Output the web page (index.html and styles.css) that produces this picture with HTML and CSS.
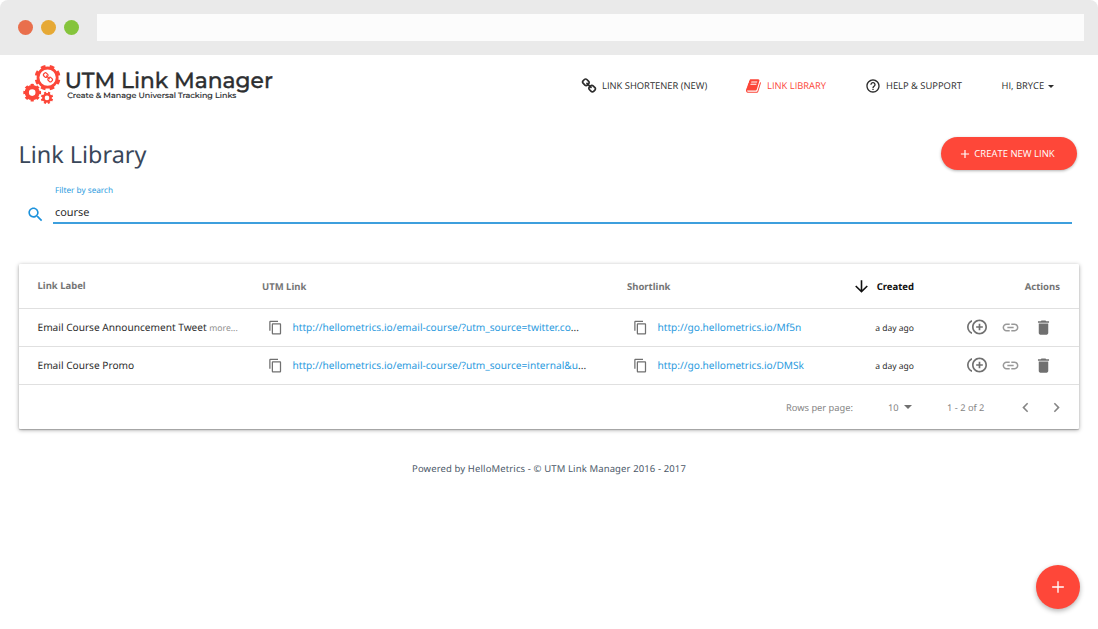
FILE: index.html
```
<!DOCTYPE html>
<html lang="en">
<head>
<meta charset="utf-8">
<title>UTM Link Manager</title>
<link rel="stylesheet" href="styles.css">
</head>
<body>
<svg class="defs" width="0" height="0" aria-hidden="true">
  <symbol id="copy" viewBox="0 0 24 24"><path d="M16 1H4c-1.100 0-2 .9-2 2v14h2V3h12V1zm3 4H8c-1.100 0-2 .9-2 2v14c0 1.100.9 2 2 2h11c1.100 0 2-.9 2-2V7c0-1.100-.9-2-2-2zm0 16H8V7h11v14z"/></symbol>
  <symbol id="dup" viewBox="0 0 24 24"><path d="M16 8h-2v3h-3v2h3v3h2v-3h3v-2h-3zM2 12c0-2.790 1.640-5.200 4.010-6.320V3.520C2.520 4.760 0 8.090 0 12s2.520 7.240 6.010 8.480v-2.160C3.640 17.200 2 14.790 2 12zm13-9c-4.960 0-9 4.040-9 9s4.040 9 9 9 9-4.040 9-9-4.040-9-9-9zm0 16c-3.860 0-7-3.140-7-7s3.140-7 7-7 7 3.140 7 7-3.140 7-7 7z"/></symbol>
  <symbol id="link" viewBox="0 0 24 24"><path d="M3.900 12c0-1.710 1.390-3.100 3.100-3.100h4V7H7c-2.760 0-5 2.240-5 5s2.240 5 5 5h4v-1.900H7c-1.710 0-3.100-1.390-3.100-3.100zM8 13h8v-2H8v2zm9-6h-4v1.900h4c1.710 0 3.100 1.390 3.100 3.100s-1.390 3.100-3.100 3.100h-4V17h4c2.760 0 5-2.240 5-5s-2.240-5-5-5z"/></symbol>
  <symbol id="trash" viewBox="0 0 24 24"><path d="M6 19c0 1.100.9 2 2 2h8c1.100 0 2-.9 2-2V7H6v12zM19 4h-3.500l-1-1h-5l-1 1H5v2h14V4z"/></symbol>
  <symbol id="chain" viewBox="0 0 1792 1792"><path d="M1520 1216q0-40-28-68l-208-208q-28-28-68-28-42 0-72 32 3 3 19 18.500t21.500 21.500 15 19 13 25.500 3.500 27.500q0 40-28 68t-68 28q-15 0-27.500-3.500t-25.500-13-19-15-21.500-21.500-18.500-19q-33 31-33 73 0 40 28 68l206 207q27 27 68 27 40 0 68-26l147-146q28-28 28-67zm-703-705q0-40-28-68l-206-207q-28-28-68-28-39 0-68 27l-147 146q-28 28-28 67 0 40 28 68l208 208q27 27 68 27 42 0 72-31-3-3-19-18.500t-21.500-21.500-15-19-13-25.500-3.500-27.500q0-40 28-68t68-28q15 0 27.500 3.500t25.500 13 19 15 21.500 21.500 18.500 19q33-31 33-73zm895 705q0 120-85 203l-147 146q-83 83-203 83-121 0-204-85l-206-207q-83-83-83-203 0-123 88-209l-88-88q-86 88-208 88-120 0-204-84l-208-208q-84-84-84-204t85-203l147-146q83-83 203-83 121 0 204 85l206 207q83 83 83 203 0 123-88 209l88 88q86-88 208-88 120 0 204 84l208 208q84 84 84 204z"/></symbol>
</svg>

<div class="chrome">
  <i class="dot red"></i><i class="dot amber"></i><i class="dot green"></i>
  <div class="address"></div>
</div>

<header class="header">
  <svg class="logo" width="256" height="44" viewBox="20 62 256 44" role="img" aria-label="UTM Link Manager">
    <g fill="none" stroke="#fc4638">
      <circle cx="47.600" cy="77.600" r="9.600" stroke-width="2.800"/>
      <circle cx="47.600" cy="77.600" r="11.500" stroke-width="2.800" pathLength="80" stroke-dasharray="5.200 4.800" stroke-dashoffset="-2.400"/>
      <circle cx="32.200" cy="92.600" r="5.400" stroke-width="4.200"/>
      <circle cx="32.200" cy="92.600" r="7.500" stroke-width="2.800" pathLength="80" stroke-dasharray="5.200 4.800" stroke-dashoffset="2.600"/>
      <circle cx="47" cy="97.900" r="3.600" stroke-width="2.600"/>
      <circle cx="47" cy="97.900" r="5.200" stroke-width="2" pathLength="80" stroke-dasharray="5.200 4.800" stroke-dashoffset="-2.600"/>
    </g>
    <use href="#chain" x="42.200" y="72" width="11.500" height="11.500" fill="#fc4638"/>
    <text class="brand" x="64.800" y="87.800" textLength="208" lengthAdjust="spacingAndGlyphs">UTM Link Manager</text>
    <text class="tagline" x="67.200" y="98" textLength="169" lengthAdjust="spacingAndGlyphs">Create &amp; Manage Universal Tracking Links</text>
  </svg>
  <nav class="nav">
    <a class="nav-item shortener"><svg width="16" height="16"><use href="#chain"/></svg><span>LINK SHORTENER (NEW)</span></a>
    <a class="nav-item library"><svg width="16" height="16" viewBox="0 0 1792 1792"><path d="M1639 478q40 57 18 129l-275 906q-19 64-76.500 107.500t-122.500 43.500h-923q-77 0-148.500-53.500t-99.500-131.500q-24-67-2-127 0-4 3-27t4-37q1-8-3-21.500t-3-19.500q2-11 8-21t16.500-23.500 16.500-23.500q23-38 45-91.500t30-91.500q3-10 .5-30t-.5-28q3-11 17-28t17-23q21-36 42-92t25-90q1-9-2.500-32t.5-28q4-13 22-30.500t22-22.500q19-26 42.500-84.500t27.500-96.500q1-8-3-25.500t-2-26.500q2-8 9-18t18-23 17-21q8-12 16.500-30.500t15-35 16-36 19.500-32 26.500-23.500 36-11.500 47.500 5.500l-1 3q38-9 51-9h761q74 0 114 56t18 130l-274 906q-36 119-71.500 153.500t-128.500 34.500h-869q-27 0-38 15-11 16-1 43 24 70 144 70h923q29 0 56-15.500t35-41.500l300-987q7-22 5-57 38 15 59 43zm-1064 2q-4 13 2 22.500t20 9.500h608q13 0 25.500-9.500t16.500-22.500l21-64q4-13-2-22.500t-20-9.500h-608q-13 0-25.500 9.500t-16.500 22.500zm-83 256q-4 13 2 22.500t20 9.500h608q13 0 25.500-9.500t16.500-22.500l21-64q4-13-2-22.500t-20-9.500h-608q-13 0-25.500 9.500t-16.500 22.500z"/></svg><span>LINK LIBRARY</span></a>
    <a class="nav-item help"><svg width="16" height="16" viewBox="0 0 24 24"><path d="M11 18h2v-2h-2v2zm1-16C6.480 2 2 6.480 2 12s4.480 10 10 10 10-4.480 10-10S17.520 2 12 2zm0 18c-4.410 0-8-3.590-8-8s3.590-8 8-8 8 3.590 8 8-3.590 8-8 8zm0-14c-2.210 0-4 1.790-4 4h2c0-1.100.9-2 2-2s2 .9 2 2c0 2-3 1.750-3 5h2c0-2.250 3-2.500 3-5 0-2.210-1.790-4-4-4z"/></svg><span>HELP &amp; SUPPORT</span></a>
    <a class="nav-item user"><span>HI, BRYCE</span><i class="caret"></i></a>
  </nav>
</header>

<main class="main">
  <div class="title-row">
    <h1 class="title">Link Library</h1>
    <button class="create"><svg width="14" height="14" viewBox="0 0 24 24"><path d="M19 13h-6v6h-2v-6H5v-2h6V5h2v6h6v2z"/></svg><span>CREATE NEW LINK</span></button>
  </div>

  <div class="search">
    <svg class="search-icon" width="19" height="19" viewBox="0 0 24 24"><path d="M15.500 14h-.79l-.28-.27C15.410 12.590 16 11.110 16 9.500 16 5.910 13.090 3 9.500 3S3 5.910 3 9.500 5.910 16 9.500 16c1.610 0 3.090-.59 4.230-1.570l.27.28v.79l5 4.990L20.490 19l-4.990-5zm-6 0C7.010 14 5 11.990 5 9.500S7.010 5 9.500 5 14 7.010 14 9.500 11.990 14 9.500 14z"/></svg>
    <div class="field">
      <div class="field-label"><span>Filter by search</span></div>
      <div class="field-value"><span>course</span></div>
    </div>
  </div>

  <section class="card">
    <div class="row head">
      <div class="c1"><span>Link Label</span></div>
      <div class="c2"><span>UTM Link</span></div>
      <div class="c3"><span>Shortlink</span></div>
      <div class="c4 sorted"><svg width="19" height="19" viewBox="0 0 24 24"><path d="M20 12l-1.410-1.410L13 16.170V4h-2v12.170l-5.580-5.590L4 12l8 8 8-8z"/></svg><span>Created</span></div>
      <div class="c5"><span>Actions</span></div>
    </div>
    <div class="row">
      <div class="c1"><span>Email Course Announcement Tweet</span> <span class="more">more...</span></div>
      <div class="c2 url"><svg width="15" height="15"><use href="#copy"/></svg><a>http://hellometrics.io/email-course/?utm_source=twitter.co<b>...</b></a></div>
      <div class="c3 url"><svg width="15" height="15"><use href="#copy"/></svg><a>http://go.hellometrics.io/Mf5n</a></div>
      <div class="c4 ago"><span>a day ago</span></div>
      <div class="c5 actions"><svg width="20" height="20"><use href="#dup"/></svg><svg class="faint" width="19" height="19"><use href="#link"/></svg><svg width="19" height="19"><use href="#trash"/></svg></div>
    </div>
    <div class="row">
      <div class="c1"><span>Email Course Promo</span></div>
      <div class="c2 url"><svg width="15" height="15"><use href="#copy"/></svg><a>http://hellometrics.io/email-course/?utm_source=internal&amp;u<b>...</b></a></div>
      <div class="c3 url"><svg width="15" height="15"><use href="#copy"/></svg><a>http://go.hellometrics.io/DMSk</a></div>
      <div class="c4 ago"><span>a day ago</span></div>
      <div class="c5 actions"><svg width="20" height="20"><use href="#dup"/></svg><svg class="faint" width="19" height="19"><use href="#link"/></svg><svg width="19" height="19"><use href="#trash"/></svg></div>
    </div>
    <div class="pager">
      <span class="rpp">Rows per page:</span>
      <span class="size">10<i class="caret"></i></span>
      <span class="range">1 - 2 of 2</span>
      <svg width="19" height="19" viewBox="0 0 24 24"><path d="M15.410 7.410L14 6l-6 6 6 6 1.410-1.410L10.830 12z"/></svg>
      <svg class="next" width="19" height="19" viewBox="0 0 24 24"><path d="M10 6L8.590 7.410 13.170 12l-4.580 4.590L10 18l6-6z"/></svg>
    </div>
  </section>
  <footer class="footer"><span>Powered by HelloMetrics - © UTM Link Manager 2016 - 2017</span></footer>
</main>

<button class="fab"><svg width="20" height="20" viewBox="0 0 24 24"><path d="M19 12.800h-6.200V19h-1.600v-6.200H5v-1.600h6.200V5h1.600v6.200H19z"/></svg></button>
</body>
</html>
```
FILE: styles.css
```
* { box-sizing: border-box; }
html { background: #fff; }
body { margin: 0; height: 629px; overflow: hidden; background: #fff; font-family: "Noto Sans", "Open Sans", sans-serif; color: #2c2c2c; font-size: 10.150px; text-rendering: geometricPrecision; }
svg { display: block; flex: none; fill: currentColor; }
.defs { position: absolute; }
span { white-space: nowrap; }
button { border: 0; padding: 0; font: inherit; }

.chrome { display: flex; align-items: center; height: 55px; padding: 0 14px 0 18px; background: #eaeaea; border-radius: 8px 8px 0 0; }
.dot { width: 15px; height: 15px; margin-right: 8px; border-radius: 50%; }
.red { background: #e96f4c; }
.amber { background: #e6a935; }
.green { background: #85c43c; }
.address { flex: 1; height: 27px; margin-left: 10px; background: #fcfcfc; }

.header { display: flex; height: 62px; padding: 7px 0 0 20px; }
.logo { overflow: visible; }
.brand { font: 500 22px Montserrat, Inter, sans-serif; fill: #2d2f31; stroke: #2d2f31; stroke-width: .35px; }
.tagline { font: 500 7.600px Montserrat, Inter, sans-serif; fill: #2d2f31; stroke: #2d2f31; stroke-width: .15px; }
.nav { display: flex; align-items: center; height: 47px; margin-left: 305px; font-family: "Open Sans", sans-serif; font-size: 9.400px; }
.nav-item { display: flex; align-items: center; gap: 5px; }
.shortener { width: 165px; }
.library { width: 119px; color: #fc4638; }
.help { width: 136.500px; }
.caret { border: 3.500px solid transparent; border-top-color: currentColor; border-bottom: 0; }
.user .caret { margin-left: -1px; margin-top: 1px; }

.main { padding: 0 19px; }
.title-row { display: flex; justify-content: space-between; height: 66px; padding-top: 20px; }
.title { margin: -1px 0 0 -.5px; font: 400 23.400px/36px "Noto Sans", sans-serif; color: #39475a; }
.create { display: flex; align-items: center; justify-content: center; gap: 2px; width: 136px; height: 33px; margin-right: 2px; padding-right: 5px; border-radius: 17px; background: #fe4739; color: #fff; font-family: "Open Sans", sans-serif; font-size: 9.500px; box-shadow: 0 1px 3px rgba(0,0,0,.3); }

.search { display: flex; padding: 0 7px 0 7px; height: 81px; }
.search-icon { margin-top: 22px; color: #1c92dc; }
.field { flex: 1; height: 41px; margin-left: 8px; padding-left: 2px; border-bottom: 2px solid #3d9fdd; }
.field-label { height: 16px; font-size: 8.200px; line-height: 16px; color: #2c9ce0; }
.field-value { font-size: 10.900px; line-height: 28px; }

.card { height: 165px; background: #fff; border-radius: 1px; box-shadow: 0 1px 4px rgba(0,0,0,.35), 0 1px 1px rgba(0,0,0,.2); }
.row { display: grid; grid-template-columns: 243px 365px 229px 111px 94px; align-items: center; height: 38px; padding-right: 19px; border-bottom: 1px solid #e0e0e0; }
.head { height: 45px; font-weight: 700; font-size: 9.500px; color: #757575; }
.c1 { padding-left: 18.500px; padding-bottom: 1px; }
.c4 { justify-self: end; margin-right: 53px; }
.head .c5 { justify-self: end; margin-right: 1px; }
.sorted { display: flex; align-items: center; gap: 6px; color: #111; }
.more { font-size: 8.600px; color: #8d8d8d; }
.url { display: flex; align-items: center; gap: 9.500px; padding-left: 6px; padding-bottom: 1px; color: #707070; }
.url a { margin-top: -1px; color: #2a9ade; white-space: nowrap; }
.url b { font-weight: 400; color: #333; }
.ago { padding-top: 1px; font-size: 8.500px; }
.actions { display: flex; align-items: center; gap: 14px; padding-bottom: 1px; color: #707070; }
.faint { color: #999; }
.pager { display: flex; align-items: center; height: 44px; padding-left: 767px; font-size: 9.300px; color: #858585; }
.rpp { width: 102px; }
.size { display: flex; align-items: center; gap: 5px; width: 59px; }
.size .caret { border-width: 4px 4px 0; color: #707070; }
.range { width: 69px; }
.next { margin-left: 12px; }
.footer { padding-top: 32px; text-align: center; font-size: 9.500px; letter-spacing: .12px; line-height: 16px; color: #4b5868; }
.fab { position: absolute; left: 1036px; top: 565px; display: flex; align-items: center; justify-content: center; width: 44px; height: 44px; border-radius: 50%; background: #fe4739; color: #fff; box-shadow: 0 2px 5px rgba(0,0,0,.3); }
```
